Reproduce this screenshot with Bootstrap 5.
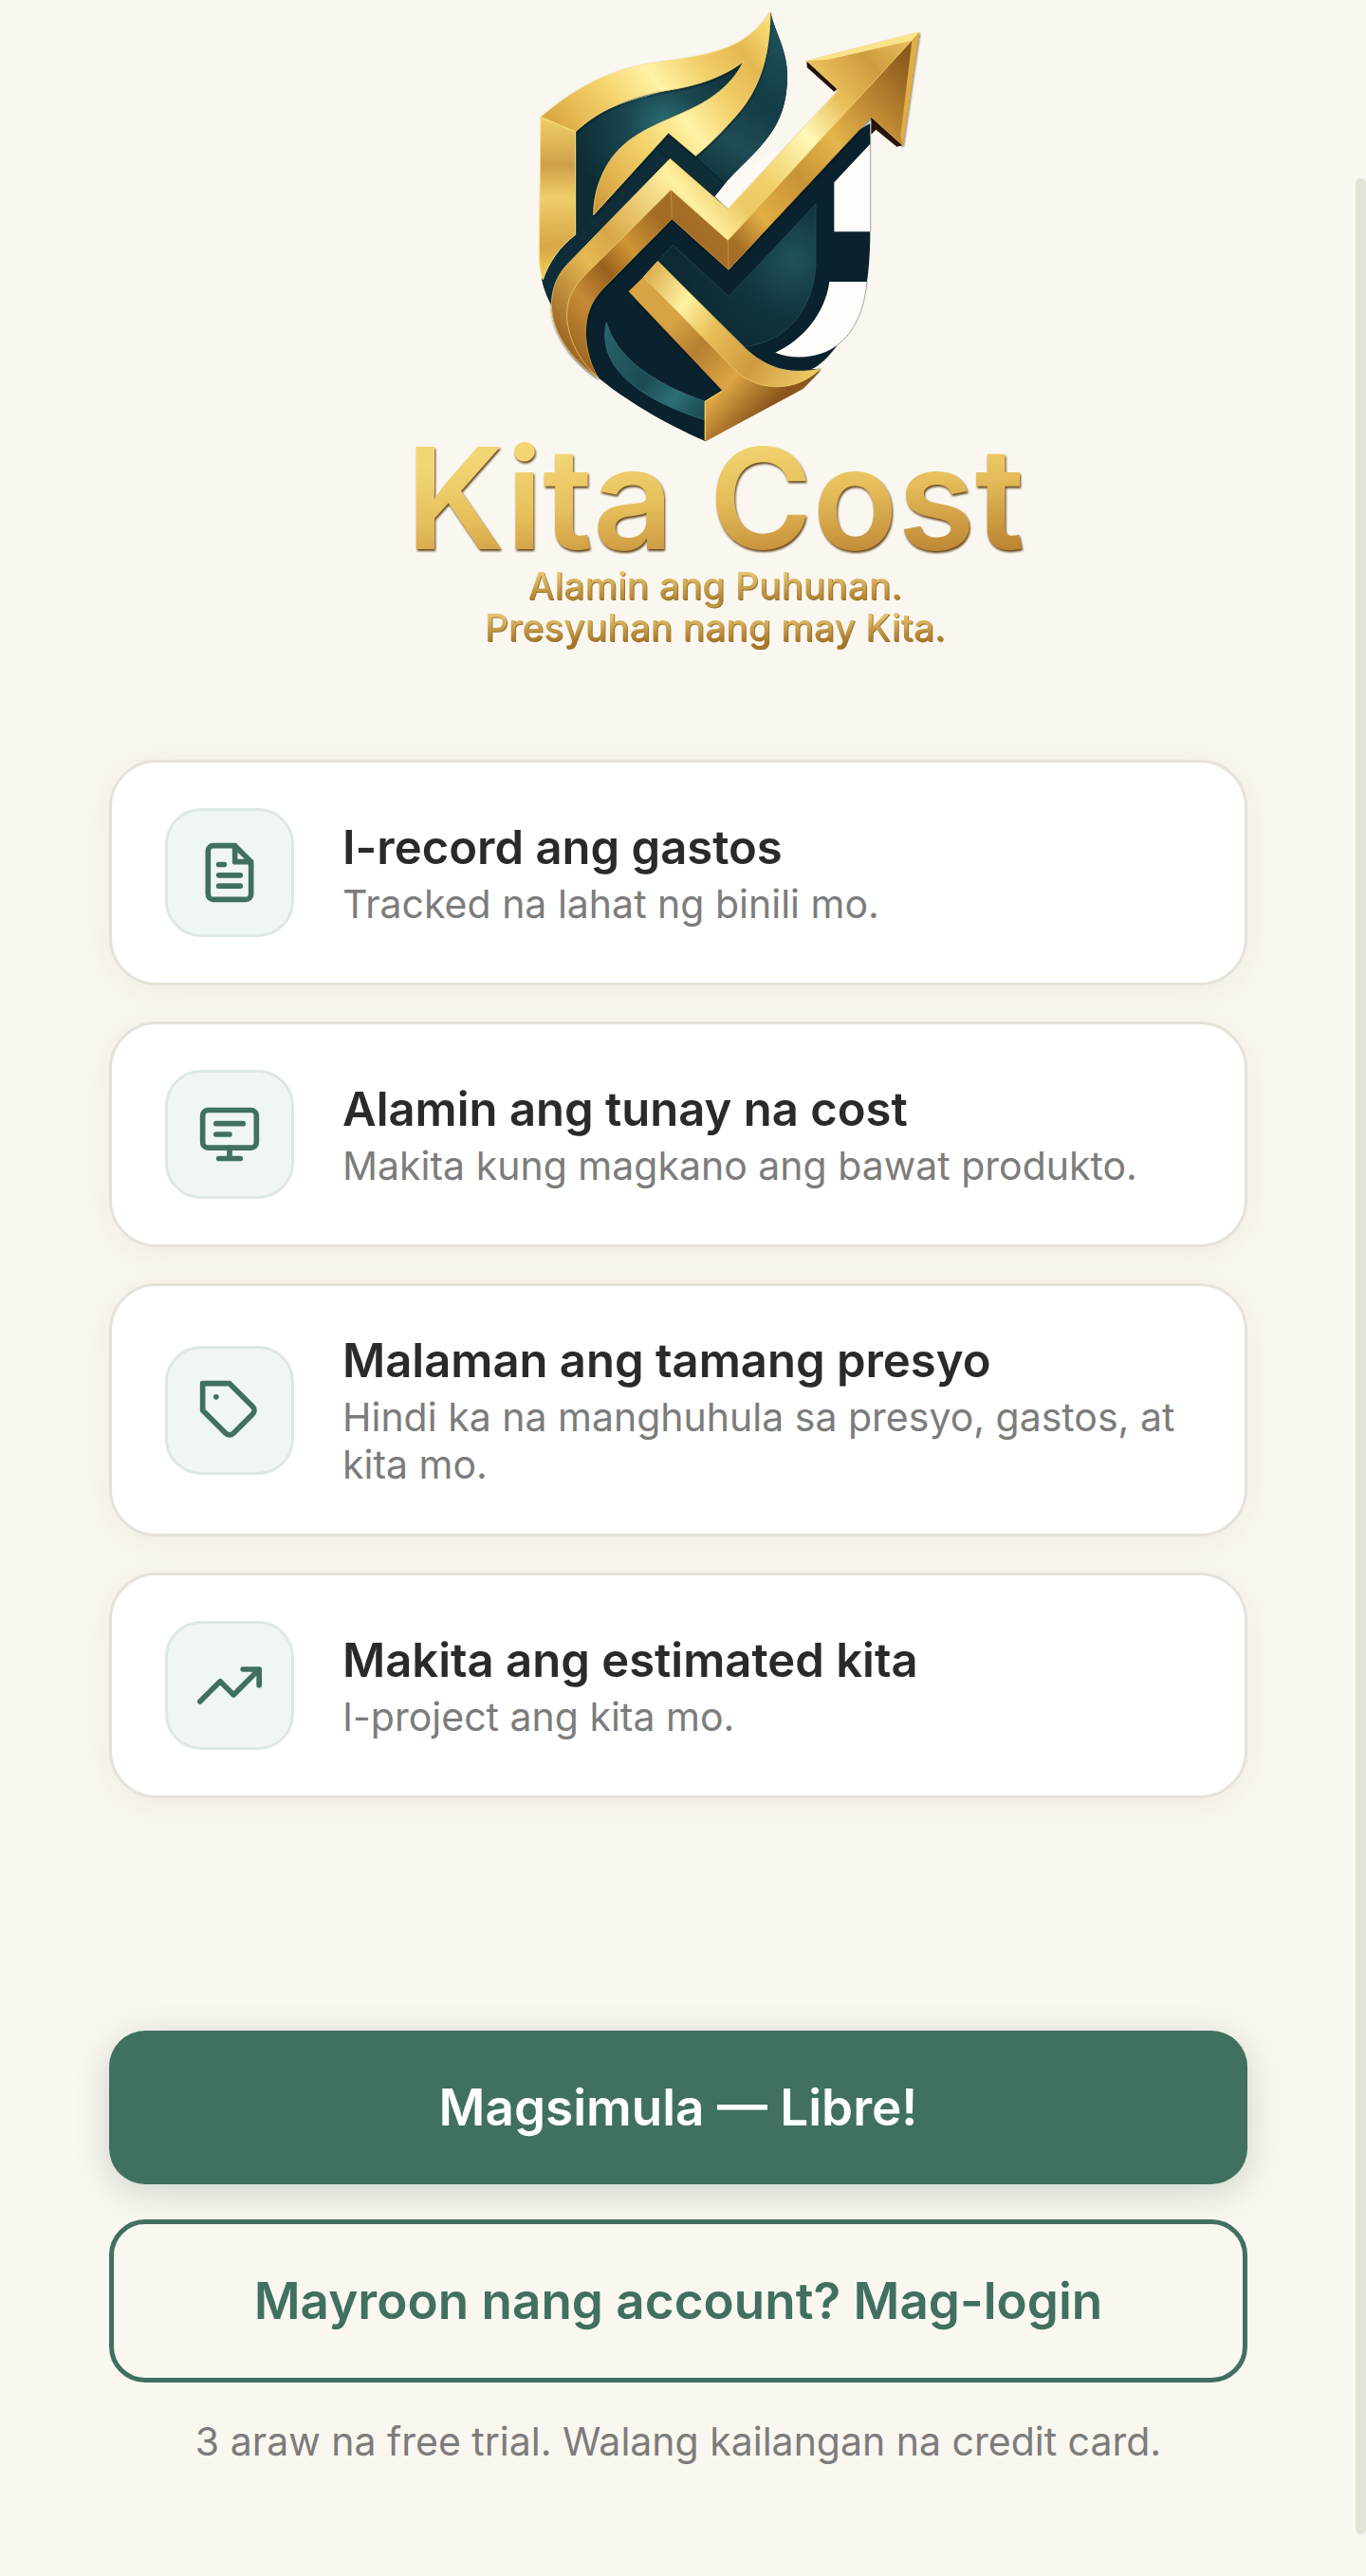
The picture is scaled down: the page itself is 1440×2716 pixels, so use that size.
<!DOCTYPE html>
<html lang="tl">
<head>
<meta charset="utf-8">
<meta name="viewport" content="width=device-width, initial-scale=1">
<title>Kita Cost</title>
<link href="https://cdn.jsdelivr.net/npm/bootstrap@5.3.0/dist/css/bootstrap.min.css" rel="stylesheet">
<style>
  body { background: #faf7f0; font-family: Inter, "Liberation Sans", sans-serif; color: #2a2a2a; overflow-x: hidden; }
  .welcome { padding: 0 125px 64px 115px; }
  .brand { padding-left: 78px; margin-bottom: 117px; }
  .brand-mark { width: 460px; height: 466px; }
  .brand-name, .brand-tag { -webkit-background-clip: text; background-clip: text; color: transparent; }
  .brand-name { font-size: 148px; line-height: 120px; font-weight: 600; background-image: linear-gradient(175deg, #f3d674 15%, #e6bf5c 50%, #bd8432 95%); filter: drop-shadow(1px 2px 1px #5e4115); }
  .brand-tag { font-size: 39px; line-height: 44px; font-weight: 500; margin-top: 10px; background-image: linear-gradient(180deg, #e6c56c 10%, #b0802f 42%, #e6c56c 60%, #a87428 92%); filter: drop-shadow(1px 1px 0 #9a7432); }
  .steps { gap: 38px; margin-bottom: 245px; }
  .step { border: 3px solid #e5e2d9; border-radius: 50px; padding: 48px 56px; gap: 51px; background: #fff; box-shadow: 0 6px 34px rgba(60, 50, 20, .06); }
  .step-icon { width: 136px; height: 136px; border: 3px solid #dde8e4; border-radius: 38px; background: #f0f6f4; color: #40705f; }
  .step-icon svg { width: 68px; height: 68px; fill: none; stroke: currentColor; stroke-width: 2; stroke-linecap: round; stroke-linejoin: round; }
  .step-title { font-size: 49px; line-height: 62px; font-weight: 600; }
  .step-note { font-size: 41px; line-height: 50px; margin-top: 3px; color: #7c7c7c; }
  .actions { gap: 37px; }
  .action { font-size: 53px; line-height: 62px; font-weight: 600; border-radius: 38px; padding: 50px 24px; --bs-btn-border-width: 0; }
  .action-start { --bs-btn-color: #fff; --bs-btn-bg: #40705f; --bs-btn-hover-bg: #375e50; --bs-btn-hover-color: #fff; box-shadow: 0 8px 36px rgba(64, 112, 95, .25); }
  .action-login { --bs-btn-color: #40705f; --bs-btn-border-color: #40705f; --bs-btn-border-width: 5px; --bs-btn-hover-color: #40705f; --bs-btn-hover-border-color: #375e50; }
  .trial { font-size: 41px; line-height: 50px; margin-top: 37px; color: #7c7c7c; }
  .scroll-thumb { position: fixed; top: 188px; bottom: 44px; right: 0; width: 11px; background: #e5e2d7; }
</style>
</head>
<body>
<main class="welcome">
  <header class="brand d-flex flex-column align-items-center text-center">
    <svg class="brand-mark" viewBox="-48 0 1380 1398" role="img" aria-label="Kita Cost logo">
      <defs>
        <linearGradient id="flame" x1="90" y1="600" x2="820" y2="60" gradientUnits="userSpaceOnUse"><stop offset="0" stop-color="#b57c30"/><stop offset=".2" stop-color="#dfae48"/><stop offset=".4" stop-color="#f5d670"/><stop offset=".55" stop-color="#fff3a6"/><stop offset=".7" stop-color="#f2d06b"/><stop offset=".85" stop-color="#e4b850"/><stop offset="1" stop-color="#fbe27a"/></linearGradient>
        <linearGradient id="panel" x1="0" y1="370" x2="0" y2="880" gradientUnits="userSpaceOnUse"><stop offset="0" stop-color="#f0cf68"/><stop offset=".3" stop-color="#cfa04a"/><stop offset=".5" stop-color="#efcd6a"/><stop offset=".8" stop-color="#d7a746"/><stop offset="1" stop-color="#f2cd58"/></linearGradient>
        <linearGradient id="lite" x1="130" y1="1050" x2="1290" y2="110" gradientUnits="userSpaceOnUse"><stop offset="0" stop-color="#9c6424"/><stop offset=".15" stop-color="#e5b953"/><stop offset=".22" stop-color="#d9a749"/><stop offset=".4" stop-color="#fff0a2"/><stop offset=".48" stop-color="#edc965"/><stop offset=".55" stop-color="#f2cf68"/><stop offset=".68" stop-color="#fff9b8"/><stop offset=".78" stop-color="#e9c05a"/><stop offset=".88" stop-color="#cf9b41"/><stop offset="1" stop-color="#edc861"/></linearGradient>
        <linearGradient id="deep" x1="170" y1="1150" x2="1270" y2="200" gradientUnits="userSpaceOnUse"><stop offset="0" stop-color="#8f5c20"/><stop offset=".12" stop-color="#c68b35"/><stop offset=".2" stop-color="#9a611d"/><stop offset=".27" stop-color="#cf9536"/><stop offset=".36" stop-color="#a26c24"/><stop offset=".45" stop-color="#a76f27"/><stop offset=".53" stop-color="#e2ad43"/><stop offset=".65" stop-color="#c99237"/><stop offset=".76" stop-color="#e5b64c"/><stop offset=".86" stop-color="#c38c35"/><stop offset="1" stop-color="#8a5a1c"/></linearGradient>
        <linearGradient id="bandLite" x1="430" y1="840" x2="960" y2="1200" gradientUnits="userSpaceOnUse"><stop offset="0" stop-color="#dba94a"/><stop offset=".25" stop-color="#fff2a2"/><stop offset=".45" stop-color="#e8bd55"/><stop offset=".7" stop-color="#d09b41"/><stop offset="1" stop-color="#f0cc68"/></linearGradient>
        <linearGradient id="bandDeep" x1="380" y1="900" x2="800" y2="1300" gradientUnits="userSpaceOnUse"><stop offset="0" stop-color="#dba445"/><stop offset=".3" stop-color="#d8a344"/><stop offset=".5" stop-color="#b67e2f"/><stop offset=".75" stop-color="#dda544"/><stop offset="1" stop-color="#8a571c"/></linearGradient>
        <linearGradient id="tealFlame" x1="600" y1="540" x2="860" y2="100" gradientUnits="userSpaceOnUse"><stop offset="0" stop-color="#12363f"/><stop offset=".25" stop-color="#1f4d55"/><stop offset=".55" stop-color="#133c45"/><stop offset="1" stop-color="#1f525a"/></linearGradient>
        <radialGradient id="tealLeft" cx="480" cy="390" r="300" gradientUnits="userSpaceOnUse"><stop offset="0" stop-color="#2c6c73"/><stop offset=".4" stop-color="#1a464f"/><stop offset="1" stop-color="#0d2b35"/></radialGradient>
        <radialGradient id="tealCore" cx="890" cy="820" r="360" gradientUnits="userSpaceOnUse"><stop offset="0" stop-color="#20525a"/><stop offset=".5" stop-color="#12343d"/><stop offset="1" stop-color="#0d2a34"/></radialGradient>
        <linearGradient id="crescent" x1="290" y1="1040" x2="610" y2="1300" gradientUnits="userSpaceOnUse"><stop offset="0" stop-color="#2a626a"/><stop offset=".5" stop-color="#1c4c55"/><stop offset=".75" stop-color="#2e6e75"/><stop offset="1" stop-color="#1b4b53"/></linearGradient>
        <filter id="drop" x="-10%" y="-10%" width="120%" height="120%"><feDropShadow dx="1" dy="4" stdDeviation="3" flood-color="#02090d" flood-opacity=".75"/></filter>
        <clipPath id="shield"><path d="M60 0H1310V250H1132L1018 577V733H1132L1122 891L980 1169L920 1230L610 1397L272 1199L124 985L84 880Z"/></clipPath>
      </defs>
      <path d="M672 580L640 622L682 660L860 470Q800 480 672 580Z" fill="#fdfaf5"/>
      <path d="M1132 455L1018 577V733H1132ZM1003 891H1122C1112 990 1080 1050 1030 1090C970 1132 900 1140 832 1115C920 1075 990 990 1003 891Z" fill="#fffdfa"/>
      <path d="M1133 430V733M1122 891C1112 990 1080 1050 1030 1090" fill="none" stroke="#777" stroke-width="2"/>
      <path d="M200 405C280 345 380 315 480 290C580 275 660 240 720 190L816 38C835 110 870 160 870 240C870 410 780 465 682 570L640 622L682 662L1132 390V455L1018 577V733H1132Q1132 820 1122 891H1003C990 990 920 1075 832 1115C900 1142 980 1130 1030 1090C1000 1130 970 1160 945 1168L975 1166L610 1395C480 1340 350 1260 272 1195C200 1150 125 1060 124 965C110 940 98 910 92 880L200 740Z" fill="#0a222d"/>
      <path d="M200 412C280 345 380 315 480 290C580 275 660 240 735 190C700 300 560 350 480 390C330 450 270 550 257 680L200 740Z" fill="url(#tealLeft)"/>
      <path d="M816 38C835 110 870 160 870 240C870 410 780 465 672 580L575 495C710 390 800 270 816 38Z" fill="url(#tealFlame)"/>
      <path d="M494 420L672 580L640 622L499 502L180 830C150 860 130 910 124 965C110 940 98 910 97 885C115 820 160 770 200 742L257 680Z" fill="#0e2d37"/>
      <path d="M494 420L672 580M455 468L510 510" stroke="#08202a" stroke-width="3" fill="none"/>
      <path d="M508 775L685 938L960 645V840C950 980 870 1080 735 1097L462 825Z" fill="url(#tealCore)" stroke="#25565e" stroke-width="2"/>
      <g stroke-linejoin="round" clip-path="url(#shield)">
        <path d="M90 370C190 285 300 222 440 200C600 175 730 170 816 38C815 200 770 300 700 375C660 420 620 460 580 493L494 420L257 680C257 600 290 520 340 470C400 410 480 385 560 347C640 310 700 260 731 195C650 255 560 275 480 287C370 305 270 350 200 417Z" fill="url(#flame)" stroke="#f7df80" stroke-width="2" filter="url(#drop)"/>
        <path d="M90 370L200 417V742C150 780 115 830 97 885C85 850 85 820 85 780Z" fill="url(#panel)" stroke="#f7df80" stroke-width="3"/>
      </g>
      <path d="M932 193V213L1018 290L1034 274ZM1135 370V425L1150 410L1216 464L1234 460Z" fill="#2a1607"/>
      <g filter="url(#drop)">
        <path d="M502 600L682 760L1265 125L1287 102L1235 460L1135 370L684 853L505 692L290 910C240 960 232 1010 232 1060C235 1110 250 1160 272 1195C220 1150 170 1090 172 990C175 930 200 895 235 865Z" fill="url(#deep)" stroke="#d9a548" stroke-width="2"/>
        <path d="M124 965C125 915 140 870 180 830L499 502L682 662L1032 285L932 193L1287 102L682 760L502 600L235 865C180 920 170 960 174 1020C185 1090 220 1150 272 1195C200 1150 125 1060 124 965Z" fill="url(#lite)" stroke="#f7dc78" stroke-width="2"/>
      </g>
      <path d="M932 193L1287 102L1264 128L1000 188Z" fill="#fbe58a"/>
      <path d="M1287 102L1235 460L1228 432L1264 128Z" fill="#e0ae46"/>
      <path d="M502 600L505 692M682 760L684 853" stroke="#d8a243" stroke-width="2"/>
      <path d="M298 1020C330 1130 440 1210 610 1270V1328C450 1280 260 1180 298 1020Z" fill="url(#crescent)" stroke="#3a7a80" stroke-width="2"/>
      <g clip-path="url(#shield)">
        <g filter="url(#drop)">
          <path d="M415 876L715 1180C790 1240 900 1220 975 1166C920 1250 860 1275 610 1395V1270L665 1236L368 922Z" fill="url(#bandDeep)"/>
          <path d="M460 826L720 1085C790 1160 870 1190 975 1166C900 1240 780 1245 700 1166L415 876Z" fill="url(#bandLite)" stroke="#f5d873" stroke-width="2"/>
        </g>
      </g>
      <path d="M610 1270L665 1236M610 1270V1393" stroke="#f5cf5e" stroke-width="4"/>
    </svg>
    <h1 class="brand-name mb-0">Kita Cost</h1>
    <p class="brand-tag mb-0">Alamin ang Puhunan.<br>Presyuhan nang may Kita.</p>
  </header>

  <section class="steps d-flex flex-column">
    <article class="step d-flex align-items-center">
      <div class="step-icon d-flex align-items-center justify-content-center flex-shrink-0">
        <svg viewBox="0 0 24 24" aria-hidden="true"><path d="M14 2H6a2 2 0 0 0-2 2v16a2 2 0 0 0 2 2h12a2 2 0 0 0 2-2V8zM14 2v6h6M16 13H8M16 17H8M10 9H8"/></svg>
      </div>
      <div>
        <h2 class="step-title mb-0">I-record ang gastos</h2>
        <p class="step-note mb-0">Tracked na lahat ng binili mo.</p>
      </div>
    </article>
    <article class="step d-flex align-items-center">
      <div class="step-icon d-flex align-items-center justify-content-center flex-shrink-0">
        <svg viewBox="0 0 24 24" aria-hidden="true"><rect x="2" y="3" width="20" height="14" rx="2"/><path d="M8 21h8M12 17v4M7 8h10M7 12h5"/></svg>
      </div>
      <div>
        <h2 class="step-title mb-0">Alamin ang tunay na cost</h2>
        <p class="step-note mb-0">Makita kung magkano ang bawat produkto.</p>
      </div>
    </article>
    <article class="step d-flex align-items-center">
      <div class="step-icon d-flex align-items-center justify-content-center flex-shrink-0">
        <svg viewBox="0 0 24 24" aria-hidden="true"><path d="M20.59 13.41l-7.17 7.17a2 2 0 0 1-2.83 0L2 12V2h10l8.59 8.59a2 2 0 0 1 0 2.82zM7 7h.01"/></svg>
      </div>
      <div>
        <h2 class="step-title mb-0">Malaman ang tamang presyo</h2>
        <p class="step-note mb-0">Hindi ka na manghuhula sa presyo, gastos, at kita mo.</p>
      </div>
    </article>
    <article class="step d-flex align-items-center">
      <div class="step-icon d-flex align-items-center justify-content-center flex-shrink-0">
        <svg viewBox="0 0 24 24" aria-hidden="true"><path d="M23 6l-9.500 9.500-5-5L1 18M17 6h6v6"/></svg>
      </div>
      <div>
        <h2 class="step-title mb-0">Makita ang estimated kita</h2>
        <p class="step-note mb-0">I-project ang kita mo.</p>
      </div>
    </article>
  </section>

  <div class="actions d-grid">
    <button type="button" class="btn action action-start">Magsimula — Libre!</button>
    <button type="button" class="btn action action-login">Mayroon nang account? Mag-login</button>
  </div>
  <p class="trial text-center mb-0">3 araw na free trial. Walang kailangan na credit card.</p>
</main>
<div class="scroll-thumb rounded-pill" aria-hidden="true"></div>
<script src="https://cdn.jsdelivr.net/npm/bootstrap@5.3.0/dist/js/bootstrap.bundle.min.js"></script>
</body>
</html>
